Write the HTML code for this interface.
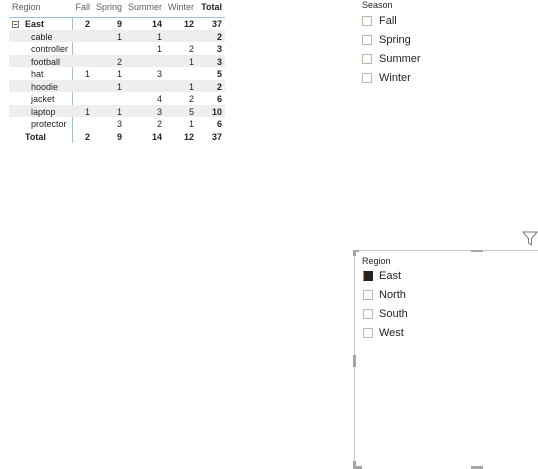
<html><head><style>
body{margin:0;width:538px;height:469px;background:#fff;font-family:"Liberation Sans",sans-serif;position:relative;overflow:hidden;color:#252423}
.a{position:absolute;white-space:nowrap}
.t{font-size:9px;line-height:12px}
.r{text-align:right}
.b{font-weight:bold}
.cb{position:absolute;width:10px;height:10px;border:1px solid #c9b3a5;box-sizing:border-box}
.sl{font-size:11px}
</style></head><body>
<div class="a t" style="left:12px;top:1px;color:#605e5c">Region</div>
<div class="a t r" style="left:60px;width:30px;top:1px;color:#605e5c">Fall</div>
<div class="a t r" style="left:90px;width:32px;top:1px;color:#605e5c">Spring</div>
<div class="a t r" style="left:122px;width:40px;top:1px;color:#605e5c">Summer</div>
<div class="a t r" style="left:162px;width:32px;top:1px;color:#605e5c">Winter</div>
<div class="a t r b" style="left:194px;width:28px;top:1px">Total</div>
<div class="a" style="left:9px;top:17px;width:216px;height:1px;background:#93c3ea"></div>
<div class="a" style="left:72px;top:17px;width:1px;height:126px;background:#93c3ea"></div>
<div class="a" style="left:9px;top:30px;width:216px;height:12px;background:#eeeeee"></div>
<div class="a" style="left:9px;top:55px;width:216px;height:12px;background:#eeeeee"></div>
<div class="a" style="left:9px;top:80px;width:216px;height:12px;background:#eeeeee"></div>
<div class="a" style="left:9px;top:105px;width:216px;height:12px;background:#eeeeee"></div>
<div class="a" style="left:12px;top:21px;width:7px;height:7px;border:1px solid #777;box-sizing:border-box"></div>
<div class="a" style="left:14px;top:24px;width:3px;height:1px;background:#555"></div>
<div id="rows"></div>
<script>
var rows=[["East","2","9","14","12","37",1,25],["cable","","1","1","","2",0,31],["controller","","","1","2","3",0,31],["football","","2","","1","3",0,31],["hat","1","1","3","","5",0,31],["hoodie","","1","","1","2",0,31],["jacket","","","4","2","6",0,31],["laptop","1","1","3","5","10",0,31],["protector","","3","2","1","6",0,31],["Total","2","9","14","12","37",1,25]];
var cols=[[60,30],[90,32],[122,40],[162,32],[194,28]],h="";
rows.forEach(function(r,i){var y=18+i*12.5;
h+='<div class="a t'+(r[6]?' b':'')+'" style="left:'+r[7]+'px;top:'+y+'px">'+r[0]+'</div>';
for(var c=0;c<5;c++)h+='<div class="a t r'+(r[6]||c==4?' b':'')+'" style="left:'+cols[c][0]+'px;width:'+cols[c][1]+'px;top:'+y+'px">'+r[c+1]+'</div>';});
document.getElementById("rows").innerHTML=h;
</script>
<div class="a t" style="left:362px;top:-1px">Season</div>
<div class="cb" style="left:362px;top:16px"></div><div class="a sl" style="left:379px;top:15px">Fall</div>
<div class="cb" style="left:362px;top:35px"></div><div class="a sl" style="left:379px;top:34px">Spring</div>
<div class="cb" style="left:362px;top:54px"></div><div class="a sl" style="left:379px;top:53px">Summer</div>
<div class="cb" style="left:362px;top:73px"></div><div class="a sl" style="left:379px;top:72px">Winter</div>
<svg class="a" style="left:522px;top:231px" width="16" height="16" viewBox="0 0 16 16"><path d="M1 1H15L9.5 7.5V14L6.5 12V7.5Z" fill="none" stroke="#777" stroke-width="1"/></svg>
<div class="a" style="left:354px;top:250px;width:184px;height:1px;background:#c8c8c8"></div>
<div class="a" style="left:354px;top:250px;width:1px;height:219px;background:#c8c8c8"></div>
<div class="a" style="left:353px;top:250px;width:3px;height:6px;background:#a6a6a6"></div>
<div class="a" style="left:353px;top:250px;width:6px;height:2px;background:#a6a6a6"></div>
<div class="a" style="left:471px;top:250px;width:12px;height:2px;background:#a6a6a6"></div>
<div class="a" style="left:353px;top:355px;width:3px;height:12px;background:#a6a6a6"></div>
<div class="a" style="left:353px;top:461px;width:3px;height:8px;background:#a6a6a6"></div>
<div class="a" style="left:353px;top:466px;width:9px;height:3px;background:#a6a6a6"></div>
<div class="a" style="left:471px;top:466px;width:12px;height:3px;background:#a6a6a6"></div>
<div class="a t" style="left:362px;top:255px">Region</div>
<div class="cb" style="left:363px;top:271px;background:#252423;border-color:#252423;border-left-color:#e08a2e"></div><div class="a sl" style="left:379px;top:270px">East</div>
<div class="cb" style="left:363px;top:290px"></div><div class="a sl" style="left:379px;top:289px">North</div>
<div class="cb" style="left:363px;top:309px"></div><div class="a sl" style="left:379px;top:308px">South</div>
<div class="cb" style="left:363px;top:328px"></div><div class="a sl" style="left:379px;top:327px">West</div>
</body></html>
